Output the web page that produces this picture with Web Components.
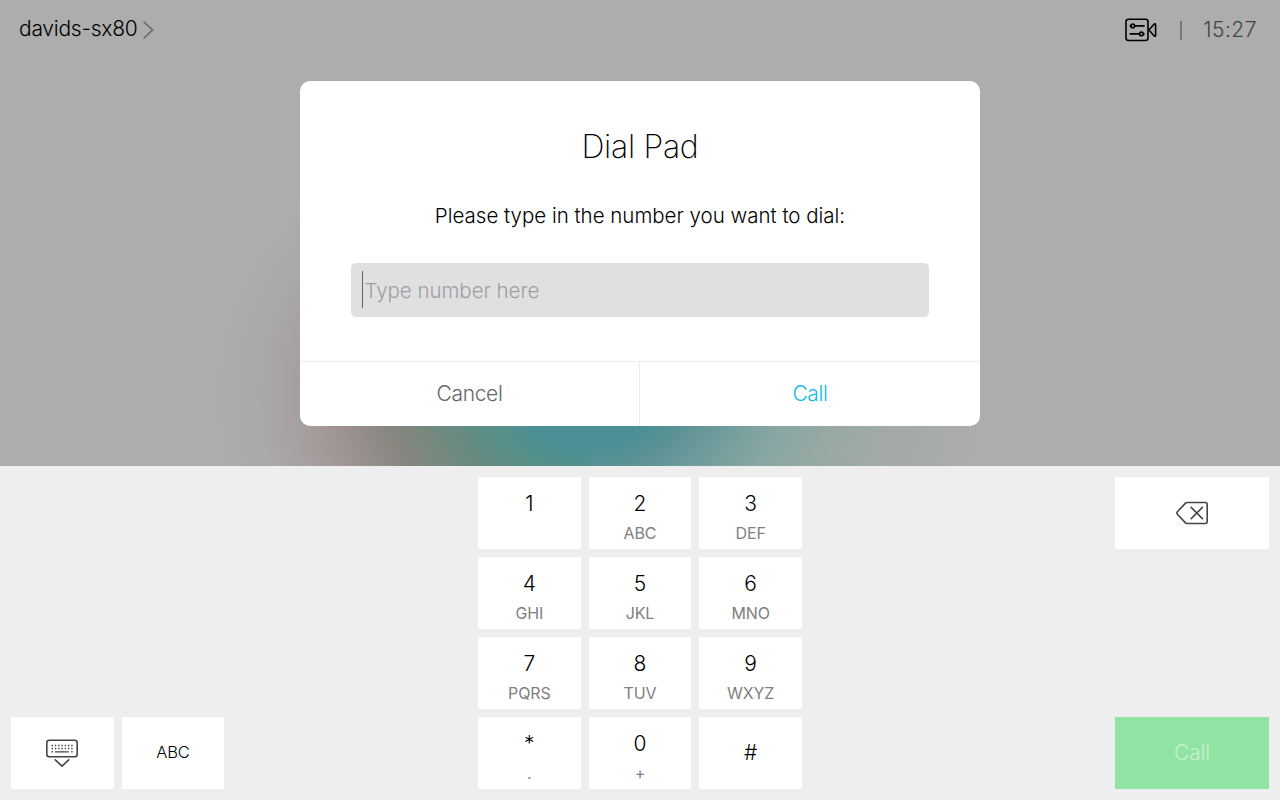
<!DOCTYPE html>
<html lang="en">
<head>
<meta charset="utf-8">
<title>Dial Pad</title>
<style>
html,body{margin:0;height:100%;overflow:hidden}
body{font-family:Inter,"Liberation Sans",sans-serif;font-weight:300;color:#000}
</style>
</head>
<body>
<touch-panel></touch-panel>
<script>
const define = (name, html) => {
  const tpl = document.createElement('template');
  tpl.innerHTML = html;
  customElements.define(name, class extends HTMLElement {
    constructor() {
      super();
      this.attachShadow({ mode: 'open' }).append(tpl.content.cloneNode(true));
    }
  });
};

define('camera-icon', `
<style>:host{display:block;width:32px;height:24px}svg{display:block}</style>
<svg width="32" height="24" viewBox="0 0 32 24" fill="none" stroke="#000" stroke-width="1.6" stroke-linejoin="round" stroke-linecap="round">
<rect x="1" y="1.3" width="22" height="21.2" rx="2.5"/>
<path d="M24 12L29 6.2Q30.6 5 30.6 7V17Q30.6 19 29 17.8Z"/>
<circle cx="7.8" cy="7.9" r="1.8"/><path d="M5.2 7.9h.6M9.7 7.9H19"/>
<circle cx="16.4" cy="15.9" r="1.8"/><path d="M5.2 15.9h9.2M18.3 15.9h.7"/>
</svg>`);

define('keyboard-icon', `
<style>:host{display:block;padding-top:1px}svg{display:block}</style>
<svg width="32" height="30" viewBox="0 0 32 30" fill="none" stroke="#444" stroke-width="1.6" stroke-linecap="round" stroke-linejoin="round">
<rect x=".8" y="1.2" width="30.4" height="16.6" rx="2.6"/>
<path d="M5.6 6.5H27M5.6 9.5H27" stroke-width="1.4" stroke-dasharray="1.4 1.87" stroke-linecap="butt"/>
<path d="M5.6 12.8h1.4M25.2 12.8h1.4" stroke-width="1.4" stroke-linecap="butt"/>
<path d="M9.5 12.8h13" stroke-width="1.3"/>
<path d="M9.3 20.8L16 27.2L22.7 20.8" stroke-width="1.6"/>
</svg>`);

define('delete-icon', `
<style>:host{display:block}svg{display:block}</style>
<svg width="32" height="24" viewBox="0 0 32 24" fill="none" stroke="#444" stroke-width="1.6" stroke-linecap="round" stroke-linejoin="round">
<path d="M11 1.5H29.2Q31.2 1.5 31.2 3.5V20.5Q31.2 22.5 29.2 22.5H11Q10.1 22.5 9.5 21.9L1.4 13.2Q.5 12 1.4 10.8L9.5 2.1Q10.1 1.5 11 1.5Z"/>
<path d="M15.2 6.4L26.4 17.6M26.4 6.4L15.2 17.6"/>
</svg>`);

define('status-bar', `
<style>
:host{display:flex;justify-content:space-between;align-items:flex-start;height:81px;box-sizing:border-box;padding:15px 23px 0 19px}
.name,.right{display:flex;align-items:center;height:30px}
.name{font-size:21px;font-weight:350;line-height:28px;letter-spacing:-.25px;height:28px}
.name svg{margin:2px 0 0 5px}
.sep{width:2px;height:19px;background:#7a7a7a;margin:0 21px 0 23px}
.time{font-size:21px;line-height:28px;color:#444;letter-spacing:.5px}
</style>
<div class="name"><span>davids-sx80</span>
<svg width="13" height="20" viewBox="0 0 13 20" fill="none" stroke="#686868" stroke-width="1.6"><path d="M1.5 1.5L10.5 10L1.5 18.5"/></svg></div>
<div class="right"><camera-icon></camera-icon><div class="sep"></div><span class="time">15:27</span></div>`);

define('dial-dialog', `
<style>
:host{display:flex;flex-direction:column;width:680px;height:345px;background:#fff;border-radius:10px;overflow:hidden;text-align:center}
.body{height:280px;box-sizing:border-box;padding:46px 51px 0}
h1{margin:0;font-size:32px;font-weight:250;line-height:40px;letter-spacing:-.3px}
p{margin:33px 0 0;font-size:20.5px;line-height:32px;font-weight:330;letter-spacing:-.01px}
.field{display:flex;align-items:center;height:54px;margin-top:31px;box-sizing:border-box;border-radius:5px;background:#e0e0e0;padding:0 11px;color:#9c9fa2;font-size:20.5px;font-weight:330;letter-spacing:-.04px}
.caret{width:1px;height:37px;background:#666;margin:0 1.5px 1px 0}
.actions{display:grid;grid-template-columns:339px 1px 340px;height:65px;box-sizing:border-box;border-top:1px solid #ececec;font-size:21px;line-height:63px;letter-spacing:-.35px}
.line{background:#ececec}
.cancel{color:#666}.call{color:#12bbe2}
</style>
<div class="body"><h1>Dial Pad</h1><p>Please type in the number you want to dial:</p>
<div class="field"><span class="caret"></span><span class="hint">Type number here</span></div></div>
<div class="actions"><div class="cancel">Cancel</div><div class="line"></div><div class="call">Call</div></div>`);

define('pad-key', `
<style>
:host{display:flex;flex-direction:column;align-items:center;height:72px;background:#fff;box-sizing:border-box;padding-top:14px;font-size:21px;line-height:26px}
:host([center]){justify-content:center;padding:0}
:host([small]){font-size:16.5px;letter-spacing:-.2px;padding-bottom:2px}
:host([green]){background:#90e3a3;color:#c6f0d0;letter-spacing:-.2px}
::slotted([slot=sub]){color:#808080;font-size:16px;line-height:20px;margin-top:6px;font-weight:380;letter-spacing:-.1px}
</style>
<slot></slot><slot name="sub"></slot>`);

define('key-board', `
<style>
:host{display:grid;grid-template-columns:1fr 324px 1fr;height:334px;box-sizing:border-box;padding:11px;background:#eee}
.left{display:grid;grid-template-columns:102.67px 102.67px;gap:8px;align-self:end}
.pad{display:grid;grid-template-columns:repeat(3,1fr);gap:8px}
.right{display:flex;flex-direction:column;justify-content:space-between;width:154px;justify-self:end}
</style>
<div class="left"><pad-key center><keyboard-icon></keyboard-icon></pad-key><pad-key center small>ABC</pad-key></div>
<div class="pad">
<pad-key>1</pad-key><pad-key>2<span slot="sub">ABC</span></pad-key><pad-key>3<span slot="sub">DEF</span></pad-key>
<pad-key>4<span slot="sub">GHI</span></pad-key><pad-key>5<span slot="sub">JKL</span></pad-key><pad-key>6<span slot="sub">MNO</span></pad-key>
<pad-key>7<span slot="sub">PQRS</span></pad-key><pad-key>8<span slot="sub">TUV</span></pad-key><pad-key>9<span slot="sub">WXYZ</span></pad-key>
<pad-key>*<span slot="sub">.</span></pad-key><pad-key>0<span slot="sub">+</span></pad-key><pad-key center>#</pad-key>
</div>
<div class="right"><pad-key center><delete-icon></delete-icon></pad-key><pad-key center green>Call</pad-key></div>`);

define('touch-panel', `
<style>
:host{display:flex;flex-direction:column;width:1280px;height:800px;background:#adadad}
.stage{height:466px;overflow:hidden;
background:
radial-gradient(ellipse 380px 300px at 590px 395px,#4b9096 17%,#579089 27%,#6f897e 41%,#85867e 53%,#a09593 68%,#a69f9f 77%,#aaa8a9 87%,#adadad 100%) 0 0/590px 466px no-repeat,
radial-gradient(ellipse 410px 300px at 0 395px,#4b9096 17%,#5b9195 24%,#6f9c9c 34%,#85a5a2 45%,#98a9a4 60%,#a4aaa7 77%,#adadad 100%) 590px 0/690px 466px no-repeat}
dial-dialog{margin:0 auto}
</style>
<div class="stage"><status-bar></status-bar><dial-dialog></dial-dialog></div>
<key-board></key-board>`);
</script>
</body>
</html>
